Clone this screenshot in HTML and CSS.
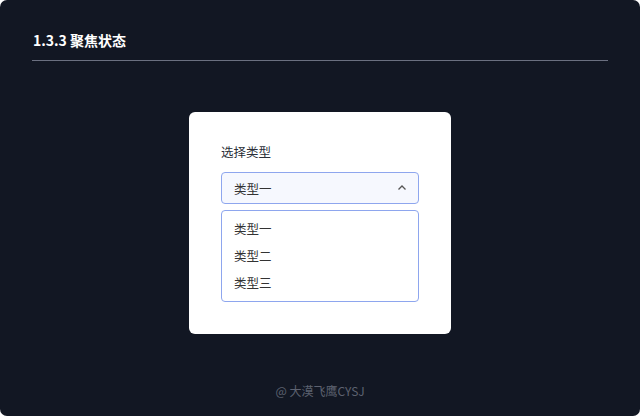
FILE: index.html
```html
<!DOCTYPE html>
<html lang="zh-CN">
<head>
    <meta charset="UTF-8">
    <meta name="viewport" content="width=device-width, initial-scale=1.0">
    <title>聚焦状态</title>
    <link rel="stylesheet" href="styles.css">
</head>
<body>
    <div class="screen">
        <header class="section-head">
            <h2>1.3.3 聚焦状态</h2>
        </header>

        <main class="stage">
            <section class="card">
                <label class="field-label">选择类型</label>
                <div class="select is-open">
                    <span class="select-value">类型一</span>
                    <svg class="chevron" width="12" height="12" viewBox="0 0 12 12">
                        <path d="M2.5 7.5 L6 4 L9.5 7.5" fill="none" stroke="#555" stroke-width="1.3"/>
                    </svg>
                </div>
                <ul class="options">
                    <li>类型一</li>
                    <li>类型二</li>
                    <li>类型三</li>
                </ul>
            </section>
        </main>

        <footer class="credit">@ 大漠飞鹰CYSJ</footer>
    </div>
</body>
</html>
```

FILE: styles.css
```css
/* Global Styles */
* {
    margin: 0;
    padding: 0;
    box-sizing: border-box;
}

body {
    font-family: 'Noto Sans CJK SC', 'Noto Sans', sans-serif;
    background-color: #ffffff;
    width: 640px;
    height: 416px;
    overflow: hidden;
}

.screen {
    width: 640px;
    height: 416px;
    background-color: #121723;
    border-radius: 7px;
    display: flex;
    flex-direction: column;
}

.section-head {
    margin: 0 32px;
    padding-top: 29px;
    height: 61px;
    border-bottom: 1px solid #6b7080;
}

.section-head h2 {
    color: #ffffff;
    font-size: 14px;
    font-weight: bold;
    line-height: 22px;
    padding-left: 1px;
}

.stage {
    display: flex;
    justify-content: center;
    padding-top: 51px;
}

.card {
    width: 262px;
    height: 222px;
    background-color: #ffffff;
    border-radius: 6px;
    padding: 31px 32px 0 32px;
}

.field-label {
    display: block;
    font-size: 12.5px;
    color: #2b2f38;
    line-height: 18px;
    margin-bottom: 11px;
}

.select {
    height: 32px;
    border: 1px solid #8ea6ee;
    border-radius: 4px;
    background-color: #f6f8fe;
    display: flex;
    align-items: center;
    justify-content: space-between;
    padding: 0 10px 0 12px;
    font-size: 12.5px;
    color: #333;
}

.options {
    list-style: none;
    margin-top: 6px;
    height: 92px;
    border: 1px solid #8ea6ee;
    border-radius: 4px;
    padding-top: 4px;
}

.options li {
    font-size: 12.5px;
    color: #333;
    line-height: 27px;
    padding-left: 12px;
}

.credit {
    margin-top: auto;
    margin-bottom: 16px;
    text-align: center;
    color: #5d6270;
    font-size: 12px;
    line-height: 18px;
}
```
